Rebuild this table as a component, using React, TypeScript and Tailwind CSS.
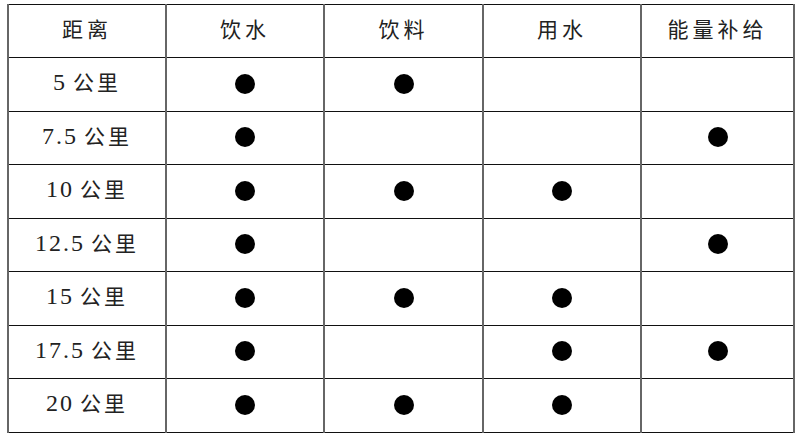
import React from "react";

const cols = ["距离", "饮水", "饮料", "用水", "能量补给"];

const rows: { num: string; marks: boolean[] }[] = [
  { num: "5", marks: [true, true, false, false] },
  { num: "7.5", marks: [true, false, false, true] },
  { num: "10", marks: [true, true, true, false] },
  { num: "12.5", marks: [true, false, false, true] },
  { num: "15", marks: [true, true, true, false] },
  { num: "17.5", marks: [true, false, true, true] },
  { num: "20", marks: [true, true, true, false] },
];

const widths = ["w-[158px]", "w-[158px]", "w-[159px]", "w-[158px]", "w-[153px]"];

const Dot = () => <span className="block mx-auto w-[20px] h-[20px] rounded-full bg-black" />;

const App = () => {
  return (
    <div className="w-[800px] h-[436px] bg-white pl-[7px] pt-[4px] overflow-hidden font-['Liberation_Serif','Noto_Sans_CJK_SC',serif] text-[#222]">
      <table className="border-collapse border-[1.5px] border-[#222] table-fixed w-[786px]">
        <thead>
          <tr className="h-[53px]">
            {cols.map((c, i) => (
              <th
                key={c}
                className={`${widths[i]} border-y border-y-[#111] border-x-2 border-x-[#666] font-normal text-[21px] tracking-[4px] text-center align-middle p-0`}
              >
                {c}
              </th>
            ))}
          </tr>
        </thead>
        <tbody>
          {rows.map((r, ri) => (
            <tr key={r.num} className={ri % 2 === 0 ? "h-[54px]" : "h-[53px]"}>
              <td className="border-y border-y-[#111] border-x-2 border-x-[#666] text-center align-middle p-0 pb-[5px] leading-none">
                <span className="text-[24px] tracking-[2px]">{r.num}</span>
                <span className="text-[21px] tracking-[3px] ml-[6px]">公里</span>
              </td>
              {r.marks.map((m, i) => (
                <td
                  key={i}
                  className="border-y border-y-[#111] border-x-2 border-x-[#666] align-middle p-0 pb-[2px]"
                >
                  {m && <Dot />}
                </td>
              ))}
            </tr>
          ))}
        </tbody>
      </table>
    </div>
  );
};

export default App;
